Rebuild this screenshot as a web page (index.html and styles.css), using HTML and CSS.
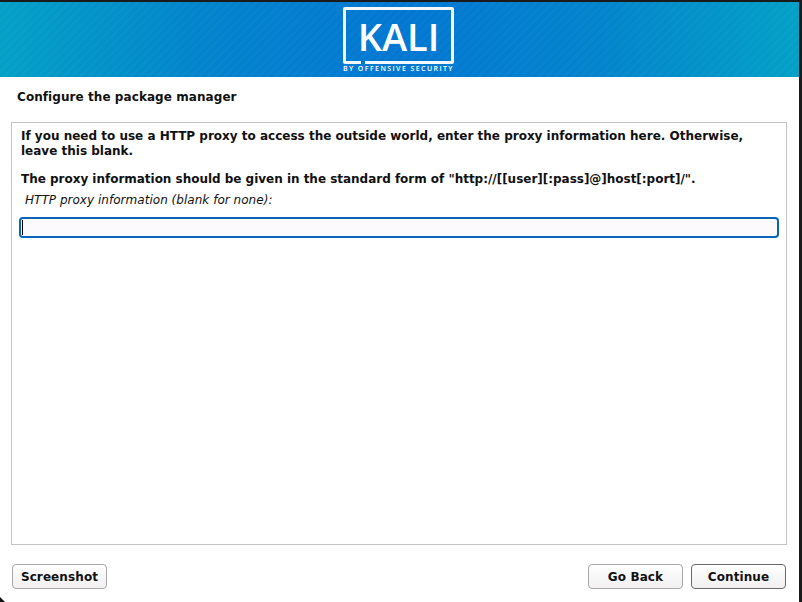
FILE: index.html
```html
<!DOCTYPE html>
<html lang="en">
<head>
    <meta charset="UTF-8">
    <title>Configure the package manager</title>
    <link rel="stylesheet" href="styles.css">
</head>
<body>
    <div class="window">
        <header class="banner">
            <div class="logo">
                <div class="logo-box">
                    <span class="logo-word">KALI</span>
                    <span class="logo-gap"></span>
                </div>
                <div class="logo-sub">BY OFFENSIVE SECURITY</div>
            </div>
        </header>
        <h1 class="title">Configure the package manager</h1>
        <main class="panel">
            <p class="text">If you need to use a HTTP proxy to access the outside world, enter the proxy information here. Otherwise, leave this blank.</p>
            <p class="text text-second">The proxy information should be given in the standard form of "http://[[user][:pass]@]host[:port]/".</p>
            <label class="field-label" for="proxy">HTTP proxy information (blank for none):</label>
            <div class="field">
                <input class="field-input" id="proxy" type="text">
                <span class="caret"></span>
            </div>
        </main>
        <footer class="actions">
            <button class="btn">Screenshot</button>
            <div class="actions-right">
                <button class="btn">Go Back</button>
                <button class="btn btn-default">Continue</button>
            </div>
        </footer>
    </div>
    <div class="pointer"></div>
</body>
</html>
```

FILE: styles.css
```css
html, body {
    margin: 0;
    padding: 0;
    height: 100%;
    background-color: #1a1a1a;
    overflow: hidden;
}
.window {
    box-sizing: border-box;
    width: 799px;
    height: 600px;
    margin-top: 2px;
    background-color: #ffffff;
    display: flex;
    flex-direction: column;
    font-family: "DejaVu Sans", sans-serif;
    color: #111111;
}
.banner {
    height: 75px;
    flex: none;
    display: flex;
    justify-content: center;
    padding-right: 2px;
    background:
        repeating-linear-gradient(135deg, rgba(255,255,255,0.02) 0 3px, rgba(255,255,255,0) 3px 6px),
        linear-gradient(90deg, #03a0c6 0%, #0284cc 25%, #0277d2 50%, #0284cc 75%, #03a0c6 100%);
}
.logo {
    width: 111px;
    padding-top: 5px;
    color: #ffffff;
}
.logo-box {
    position: relative;
    box-sizing: border-box;
    height: 57px;
    border: 3px solid #f4f8fc;
    border-radius: 2px;
    display: flex;
    justify-content: center;
    align-items: center;
}
.logo-word {
    font-family: "Open Sans", sans-serif;
    font-size: 38px;
    font-weight: 600;
    line-height: 1;
}
.logo-gap {
    position: absolute;
    left: 15px;
    bottom: -3px;
    width: 4px;
    height: 3px;
    background-color: #0277d2;
}
.logo-sub {
    font-family: "Open Sans", sans-serif;
    font-size: 7px;
    font-weight: 600;
    line-height: 9px;
    letter-spacing: 1.42px;
    white-space: nowrap;
}
.title {
    box-sizing: border-box;
    margin: 0;
    padding: 12px 0 0 17px;
    height: 33px;
    flex: none;
    font-size: 12px;
    line-height: 16px;
    font-weight: bold;
    letter-spacing: 0.07px;
}
.panel {
    box-sizing: border-box;
    height: 423px;
    flex: none;
    margin: 12px 12px 0 11px;
    padding: 6px 7px 0;
    border: 1px solid #c4c4c4;
}
.text {
    margin: 0;
    padding-left: 2px;
    font-size: 12px;
    line-height: 15px;
    font-weight: bold;
}
.text-second {
    margin-top: 13px;
    letter-spacing: -0.02px;
}
.field-label {
    display: block;
    margin-top: 6px;
    padding-left: 6px;
    font-size: 12px;
    line-height: 15px;
    font-style: italic;
    letter-spacing: 0.03px;
}
.field {
    position: relative;
    margin-top: 9px;
}
.field-input {
    display: block;
    box-sizing: border-box;
    width: 760px;
    height: 21px;
    padding: 0 3px;
    border: 2px solid #0c64b8;
    border-radius: 4px;
    background-color: #fdfafe;
    outline: none;
}
.caret {
    position: absolute;
    left: 3px;
    top: 3px;
    width: 1px;
    height: 15px;
    background-color: #000000;
}
.actions {
    display: flex;
    justify-content: space-between;
    padding: 19px 13px 0 12px;
}
.actions-right {
    display: flex;
    gap: 8px;
}
.btn {
    box-sizing: border-box;
    width: 95px;
    height: 25px;
    padding: 0;
    border: 1px solid #a8a8a8;
    border-radius: 4px;
    background: linear-gradient(#ffffff, #f1efef);
    font-family: "DejaVu Sans", sans-serif;
    font-size: 12px;
    font-weight: bold;
    letter-spacing: 0.1px;
    color: #111111;
}
.btn-default {
    border-color: #6a6a6a;
}
/* mouse pointer tip caught in the corner of the capture */
.pointer {
    position: absolute;
    left: 0;
    bottom: 0;
    border-left: 5px solid #111111;
    border-top: 5px solid transparent;
}
```
